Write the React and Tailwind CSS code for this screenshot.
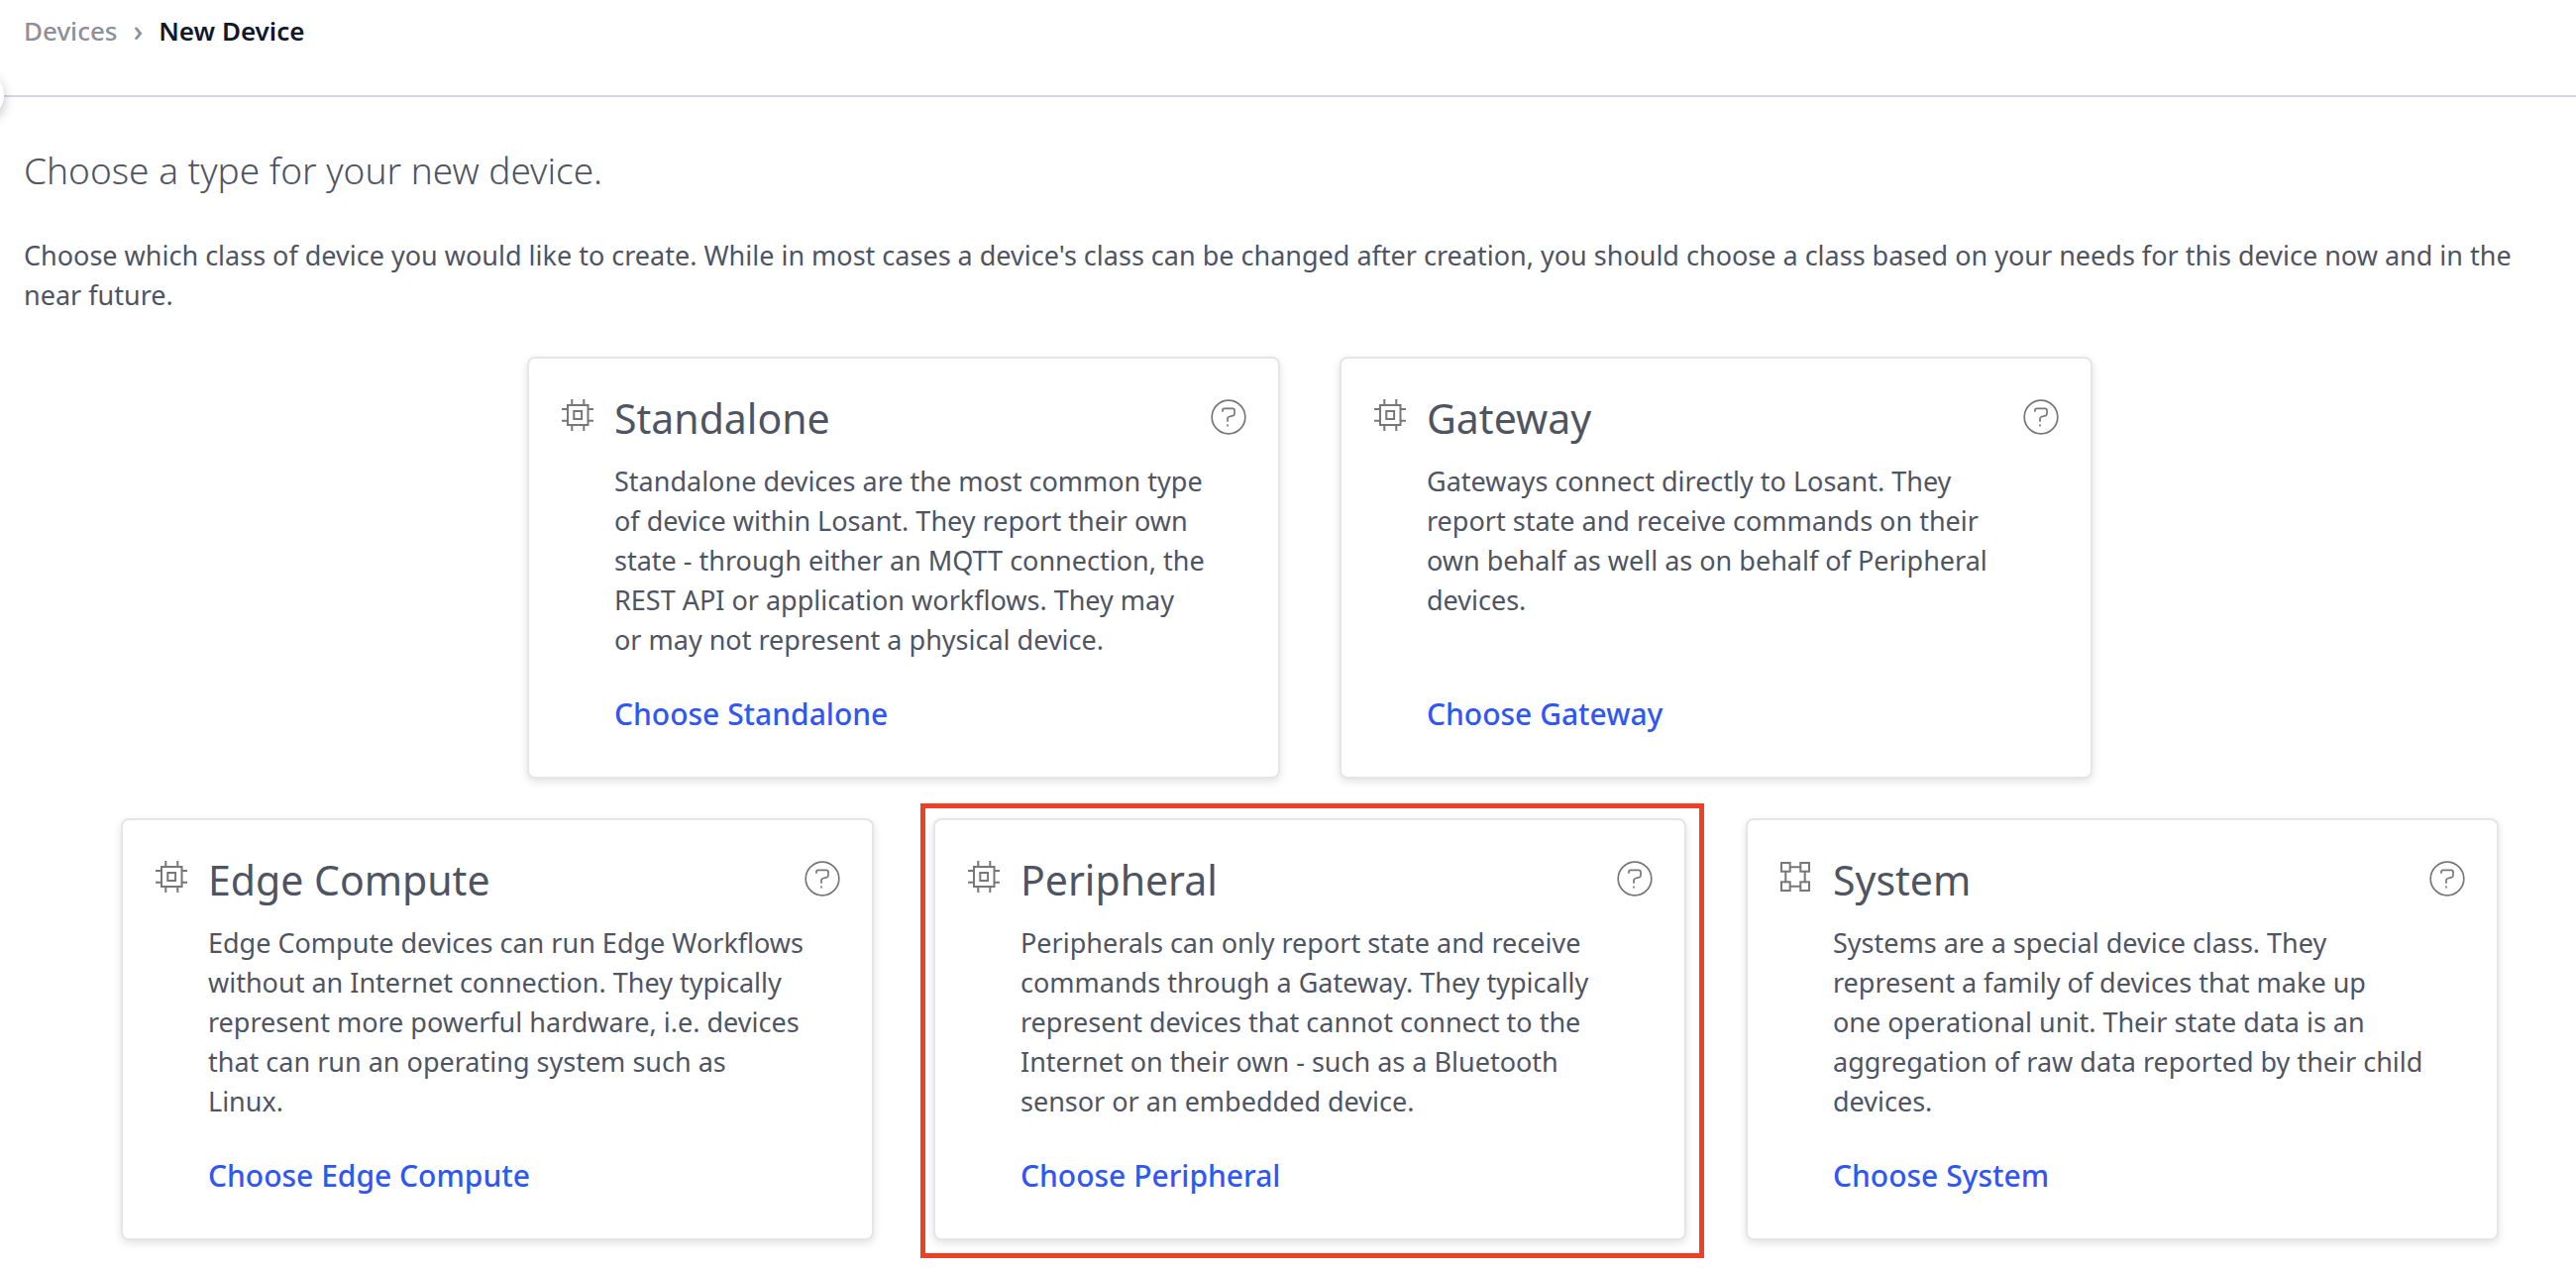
import React from 'react';

// \u00a0 keeps short words from being left at the end of a line
const rows = [
  [
    {
      name: 'Standalone',
      text: 'Standalone devices are the most common type of device within Losant. They report their own state - through either an MQTT connection, the REST API or application workflows. They may or\u00a0may not represent a physical device.',
    },
    {
      name: 'Gateway',
      text: 'Gateways connect directly to Losant. They report state and receive commands on their own behalf as well as on behalf of Peripheral devices.',
    },
  ],
  [
    {
      name: 'Edge Compute',
      text: 'Edge Compute devices can run Edge Workflows without an Internet connection. They typically represent more powerful hardware, i.e. devices that can run an operating system such as Linux.',
    },
    {
      name: 'Peripheral',
      text: 'Peripherals can only report state and receive commands through a Gateway. They typically represent devices that cannot connect to the Internet on their own - such as a Bluetooth sensor or an embedded device.',
      highlighted: true,
    },
    {
      name: 'System',
      icon: 'system',
      text: 'Systems are a special device class. They represent a family of devices that make up one\u00a0operational unit. Their state data is an aggregation of raw data reported by their child devices.',
    },
  ],
];

function ChipIcon({ className }) {
  return (
    <svg viewBox="0 0 32 32" fill="none" stroke="currentColor" strokeWidth="2" className={className} aria-hidden="true">
      <rect x="6" y="6" width="20.5" height="20" />
      <rect x="12.3" y="12" width="7.8" height="8" />
      <path d="M10.3 0v6M22.3 0v6M10.3 26v6M22.3 26v6M0 10h6M0 21.7h6M26.5 10H32M26.5 21.7H32" />
    </svg>
  );
}

function SystemIcon({ className }) {
  return (
    <svg viewBox="0 0 32 32" fill="none" stroke="currentColor" strokeWidth="2" className={className} aria-hidden="true">
      <rect x="1" y="2" width="8.7" height="8.7" />
      <rect x="20.3" y="2" width="8.7" height="8.7" />
      <rect x="1" y="21.3" width="8.7" height="8.7" />
      <rect x="20.3" y="21.3" width="8.7" height="8.7" />
      <path d="M9.7 6.3h10.6M9.7 25.7h10.6M5.3 10.7v10.6M24.7 10.7v10.6" />
    </svg>
  );
}

function HelpIcon() {
  return (
    <svg viewBox="-18 -18 36 36" fill="none" stroke="currentColor" strokeWidth="1.7" className="size-9" aria-hidden="true">
      <circle r="16.8" />
      <path d="M-6 -5.3V-7Q-6 -8.7 -4.3 -8.7H4Q6 -8.7 6 -6.8V-3.6Q6 -1.9 4.4 -1.4L0.4 -0.3Q-1 0.1 -1 1.6V4.8M-1 7.6V9.6" />
    </svg>
  );
}

function DeviceCard({ device }) {
  const Icon = device.icon === 'system' ? SystemIcon : ChipIcon;
  return (
    <article className="relative flex w-[760px] max-w-full rounded-lg border-2 border-[#e6e6e6] bg-white pt-9 pr-8 pb-[43px] pl-[33px] shadow-[0_3px_8px_rgba(0,0,0,0.12)]">
      <Icon className="mt-[5px] mr-[21px] size-8 shrink-0 text-[#777777]" />
      <div className="flex min-w-0 flex-1 flex-col items-start">
        <h2 className="text-[41px] leading-[48px]">{device.name}</h2>
        <p className="mt-5 text-[27px] leading-[40px]">{device.text}</p>
        <button type="button" className="mt-auto cursor-pointer pt-[35px] text-[30px] leading-[40px] font-medium text-[#2f57f5]">
          Choose {device.name}
        </button>
      </div>
      <button type="button" aria-label={`About ${device.name}`} className="mt-[5px] size-9 shrink-0 cursor-pointer text-[#777777]">
        <HelpIcon />
      </button>
      {device.highlighted && (
        <div className="pointer-events-none absolute -top-[17px] -right-5 -bottom-5 -left-[15px] border-[5px] border-[#ee4027]" />
      )}
    </article>
  );
}

function App() {
  return (
    <div className="min-h-screen overflow-x-hidden bg-white font-['Noto_Sans',sans-serif] text-[#4f5462]">
      <header className="relative border-b-2 border-[#d6d6dd] px-6 pt-[15px] pb-[49px]">
        <nav aria-label="Breadcrumb" className="flex items-center text-[26px] leading-[32px]">
          <a href="#devices" className="font-medium text-[#8e8f9a]">Devices</a>
          <span className="mx-4 text-[30px] font-medium text-[#8e8f9a]">›</span>
          <span className="font-semibold text-[#10182b]">New Device</span>
        </nav>
        {/* Sidebar toggle, mostly tucked behind the left edge */}
        <button type="button" aria-label="Toggle sidebar" className="absolute top-[72px] -left-11 size-12 rounded-full bg-white shadow-[0_4px_12px_rgba(0,0,0,0.25)]" />
      </header>

      <main className="px-6 pt-[50px] pb-7">
        <h1 className="text-[37px] leading-[48px] font-light">Choose a type for your new device.</h1>
        <p className="mt-[42px] text-[27px] leading-[40px]">
          Choose which class of device you would like to create. While in most cases a device's class can be changed after creation, you should choose a class based on your needs for this device now and in the near future.
        </p>

        <div className="mt-[42px] flex flex-col gap-10 pl-11">
          {rows.map((row, i) => (
            <section key={i} className="flex justify-center gap-[60px]">
              {row.map((device) => (
                <DeviceCard key={device.name} device={device} />
              ))}
            </section>
          ))}
        </div>
      </main>
    </div>
  );
}

export default App;
